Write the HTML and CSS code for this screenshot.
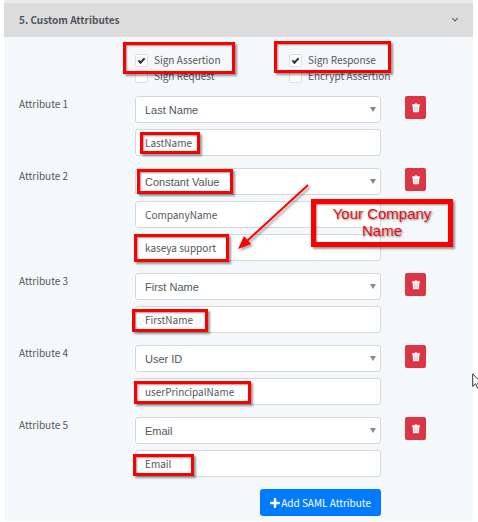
FILE: index.html
```html
<!DOCTYPE html>
<html lang="en">
<head>
  <meta charset="UTF-8">
  <meta name="viewport" content="width=device-width, initial-scale=1.0">
  <title>Custom Attributes</title>
  <link rel="stylesheet" href="styles.css">
</head>
<body>
  <svg class="hidden">
    <symbol id="trash" viewBox="0 0 10 10">
      <path d="M1 1.2h2.4L4 .4h2l.6.8H9v1.2H1zM1.6 2.4h6.8L8 8.4q-.1.8-.8.8H2.8q-.7 0-.8-.8z" fill="#fff"/>
      <path d="M3.6 3.8v4M5 3.8v4M6.4 3.8v4" stroke="#e58b93" stroke-width=".5"/>
    </symbol>
  </svg>

  <div class="panel">
    <div class="panel-header">
      <h2>5. Custom Attributes</h2>
      <button class="toggle" aria-label="Collapse">
        <svg width="8" height="6" viewBox="0 0 8 6"><path d="M1.2 1.2L4 4l2.8-2.8" fill="none" stroke="#666" stroke-width="1.2"/></svg>
      </button>
    </div>

    <form class="panel-body">
      <div class="options">
        <label class="check"><input type="checkbox" checked>Sign Assertion</label>
        <label class="check"><input type="checkbox" checked>Sign Response</label>
        <label class="check"><input type="checkbox">Sign Request</label>
        <label class="check"><input type="checkbox">Encrypt Assertion</label>
        <div class="mark mark-assertion"></div>
        <div class="mark mark-response"></div>
      </div>

      <div class="attribute">
        <label class="name" for="attr1">Attribute 1</label>
        <div class="fields">
          <div class="field select"><select id="attr1"><option>Last Name</option></select></div>
          <div class="field">
            <input type="text" value="LastName" aria-label="Attribute 1 value">
            <div class="mark mark-lastname"></div>
          </div>
        </div>
        <button type="button" class="delete" aria-label="Delete attribute 1"><svg width="10" height="10"><use href="#trash"/></svg></button>
      </div>

      <div class="attribute">
        <label class="name" for="attr2">Attribute 2</label>
        <div class="fields">
          <div class="field select">
            <select id="attr2"><option>Constant Value</option></select>
            <div class="mark mark-constant"></div>
          </div>
          <div class="field"><input type="text" value="CompanyName" aria-label="Attribute 2 name"></div>
          <div class="field">
            <input type="text" value="kaseya support" aria-label="Attribute 2 value">
            <div class="mark mark-kaseya"></div>
          </div>
          <svg class="arrow" width="74" height="70" viewBox="0 0 74 70">
            <path d="M71 3L10 59" stroke="#f00" stroke-width="2"/>
            <path d="M1 67L7 54l7 8z" fill="#f00"/>
          </svg>
          <div class="mark callout">Your Company Name</div>
        </div>
        <button type="button" class="delete" aria-label="Delete attribute 2"><svg width="10" height="10"><use href="#trash"/></svg></button>
      </div>

      <div class="attribute">
        <label class="name" for="attr3">Attribute 3</label>
        <div class="fields">
          <div class="field select"><select id="attr3"><option>First Name</option></select></div>
          <div class="field">
            <input type="text" value="FirstName" aria-label="Attribute 3 value">
            <div class="mark mark-firstname"></div>
          </div>
        </div>
        <button type="button" class="delete" aria-label="Delete attribute 3"><svg width="10" height="10"><use href="#trash"/></svg></button>
      </div>

      <div class="attribute">
        <label class="name" for="attr4">Attribute 4</label>
        <div class="fields">
          <div class="field select"><select id="attr4"><option>User ID</option></select></div>
          <div class="field">
            <input type="text" value="userPrincipalName" aria-label="Attribute 4 value">
            <div class="mark mark-principal"></div>
          </div>
        </div>
        <button type="button" class="delete" aria-label="Delete attribute 4"><svg width="10" height="10"><use href="#trash"/></svg></button>
      </div>

      <div class="attribute">
        <label class="name" for="attr5">Attribute 5</label>
        <div class="fields">
          <div class="field select"><select id="attr5"><option>Email</option></select></div>
          <div class="field">
            <input type="text" value="Email" aria-label="Attribute 5 value">
            <div class="mark mark-email"></div>
          </div>
        </div>
        <button type="button" class="delete" aria-label="Delete attribute 5"><svg width="10" height="10"><use href="#trash"/></svg></button>
      </div>

      <div class="actions">
        <button type="button" class="add">
          <svg width="10" height="10" viewBox="0 0 10 10"><path d="M5 1v8M1 5h8" stroke="#fff" stroke-width="2.4" stroke-linecap="round"/></svg>
          Add SAML Attribute
        </button>
      </div>
    </form>
  </div>

  <svg class="cursor" width="6" height="17" viewBox="0 0 6 17">
    <path d="M.7.8v12.6l2.9-2.7 2 4.6 2-.9-2-4.4h4z" fill="#fff" stroke="#333"/>
  </svg>
</body>
</html>
```

FILE: styles.css
```css
body {
  position: relative;
  margin: 0;
  padding: 0 5px 1px 4px;
  background: #fff;
  color: #50575e;
  font-family: "Noto Sans CJK SC", "Noto Sans", sans-serif;
  font-size: 10px;
  line-height: 16px;
}
input, select, button {
  font: inherit;
  color: inherit;
  box-sizing: border-box;
  margin: 0;
}
.hidden {
  display: none;
}
.panel {
  background: #f5f8fb;
  border-top: 3px solid #ececec;
}
.panel-header {
  display: flex;
  justify-content: space-between;
  align-items: center;
  height: 34px;
  padding: 0 14px 0 15px;
  background: #dcdcdc;
}
.panel-header h2 {
  margin: 0;
  font-size: 10px;
  font-weight: bold;
}
.toggle {
  display: flex;
  padding: 0;
  border: 0;
  background: none;
}
.panel-body {
  display: flex;
  flex-direction: column;
  gap: 12px;
  padding: 15px 47px 5px 15px;
}
.options {
  position: relative;
  display: grid;
  grid-template-columns: 154px 1fr;
  margin-left: 116px;
}
.check {
  display: flex;
  align-items: center;
  gap: 6px;
}
.check input {
  appearance: none;
  width: 13px;
  height: 13px;
  border: 1px solid #dde1e5;
  border-radius: 2px;
  background: #fff;
}
.check input:checked::before {
  content: "";
  display: block;
  width: 5px;
  height: 2px;
  margin: 3px 0 0 2px;
  border: solid #333;
  border-width: 0 0 2px 2px;
  transform: rotate(-45deg);
}
.attribute {
  display: grid;
  grid-template-columns: 116px 1fr 45px;
  align-items: start;
}
.fields {
  position: relative;
  display: flex;
  flex-direction: column;
  gap: 6px;
}
.field {
  position: relative;
  display: flex;
}
.field input, .field select {
  width: 100%;
  height: 27px;
  padding: 0 9px;
  border: 1px solid #d5d9df;
  border-radius: 3px;
  background: #fff;
}
.field select {
  appearance: none;
  font-family: "Liberation Sans", Arial, sans-serif;
  font-size: 11px;
}
.select::after {
  content: "";
  position: absolute;
  top: 11px;
  right: 5px;
  border: solid transparent;
  border-width: 5px 3px 0;
  border-top-color: #888;
}
.delete {
  display: flex;
  align-items: center;
  justify-content: center;
  justify-self: end;
  width: 21px;
  height: 23px;
  padding: 0;
  border: 0;
  border-radius: 2px;
  background: #dc3545;
}
.actions {
  display: flex;
  justify-content: flex-end;
  padding-right: 45px;
}
.add {
  display: flex;
  align-items: center;
  gap: 1px;
  height: 27px;
  padding: 0 10px;
  border: 0;
  border-radius: 3px;
  background: #007bff;
  color: #fff;
}

/* red annotations drawn over the form */
.mark {
  position: absolute;
  box-sizing: border-box;
  border: 3px solid #fa0000;
  box-shadow: 2px 2px 2px rgba(0, 0, 0, 0.4), inset 1px 1px 2px rgba(0, 0, 0, 0.4);
  pointer-events: none;
}
.mark-assertion {
  top: -10px;
  left: -12px;
  width: 112px;
  height: 32px;
}
.mark-response {
  top: -11px;
  left: 139px;
  width: 117px;
  height: 32px;
}
.mark-lastname {
  top: 3px;
  left: 5px;
  width: 60px;
  height: 22px;
}
.mark-constant {
  top: 1px;
  left: 2px;
  width: 96px;
  height: 25px;
}
.mark-kaseya {
  top: 0;
  left: -1px;
  width: 95px;
  height: 28px;
}
.mark-firstname {
  top: 3px;
  left: -3px;
  width: 76px;
  height: 23px;
}
.mark-principal {
  top: 3px;
  left: -1px;
  width: 117px;
  height: 23px;
}
.mark-email {
  top: 4px;
  left: -2px;
  width: 61px;
  height: 22px;
}
.callout {
  top: 31px;
  right: -72px;
  width: 142px;
  border-width: 5px;
  padding: 1px 10px 3px;
  color: #e01010;
  font-family: "Liberation Sans", Arial, sans-serif;
  font-size: 15px;
  line-height: 17px;
  text-align: center;
  text-shadow: 1px 1px 2px rgba(0, 0, 0, 0.5);
}
.arrow {
  position: absolute;
  top: 14px;
  right: 70px;
  filter: drop-shadow(2px 2px 1px rgba(0, 0, 0, 0.35));
}
.cursor {
  position: absolute;
  top: 373px;
  right: 0;
}
```
